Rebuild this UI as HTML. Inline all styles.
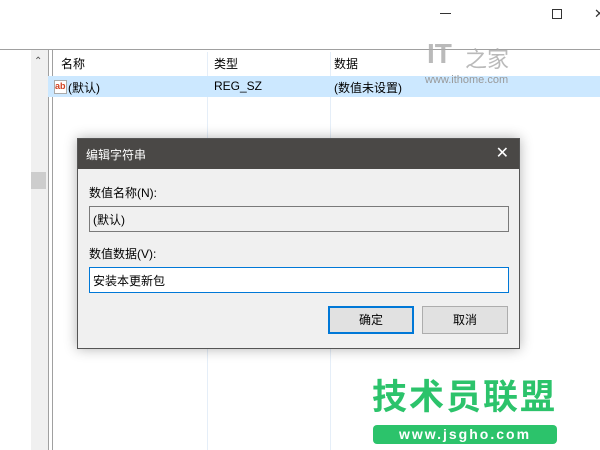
<!DOCTYPE html>
<html><head><meta charset="utf-8"><style>
*{margin:0;padding:0;box-sizing:border-box}
body{width:600px;height:450px;background:#fff;position:relative;overflow:hidden;font-family:"Liberation Sans","Noto Sans CJK SC",sans-serif;font-size:12px;color:#000}
.a{position:absolute}
</style></head><body>
<div class="a" style="left:440px;top:13px;width:11px;height:1px;background:#333"></div>
<div class="a" style="left:552px;top:9px;width:10px;height:10px;border:1px solid #333"></div>
<div class="a" style="left:594px;top:6px;font-size:13px;color:#333">✕</div>
<div class="a" style="left:0;top:49px;width:600px;height:1px;background:#a0a0a0"></div>
<div class="a" style="left:31px;top:50px;width:17px;height:400px;background:#f0f0f0"></div>
<div class="a" style="left:31px;top:172px;width:15px;height:17px;background:#cdcdcd"></div>
<div class="a" style="left:34px;top:56px;font-size:10px;color:#555">&#8963;</div>
<div class="a" style="left:48px;top:50px;width:1px;height:400px;background:#a0a0a0"></div>
<div class="a" style="left:52px;top:50px;width:1px;height:400px;background:#a0a0a0"></div>
<div class="a" style="left:207px;top:52px;width:1px;height:398px;background:#e5eef8"></div>
<div class="a" style="left:330px;top:52px;width:1px;height:398px;background:#e5eef8"></div>
<div class="a" style="left:48px;top:76px;width:552px;height:21px;background:#cce8ff"></div>
<div class="a" style="left:61px;top:55px">名称</div>
<div class="a" style="left:214px;top:55px">类型</div>
<div class="a" style="left:334px;top:55px">数据</div>
<div class="a" style="left:54px;top:80px;width:13px;height:14px;border:1px solid #aaa;background:#fff;color:#d04020;font-size:9px;font-weight:bold;line-height:10px">ab</div>
<div class="a" style="left:68px;top:79px">(默认)</div>
<div class="a" style="left:214px;top:79px">REG_SZ</div>
<div class="a" style="left:334px;top:79px">(数值未设置)</div>
<div class="a" style="left:427px;top:40px;width:35px;height:28px;color:#aaa;font-size:28px;font-weight:bold;line-height:28px;opacity:.8">IT</div>
<div class="a" style="left:465px;top:42px;color:#aaa;font-size:22px;opacity:.8">之家</div>
<div class="a" style="left:425px;top:74px;color:#999;font-size:11px">www.ithome.com</div>
<div class="a" style="left:77px;top:138px;width:443px;height:211px;background:#f0f0f0;border:1px solid #555;box-shadow:0 0 12px rgba(0,0,0,.3)">
 <div style="height:30px;background:#4a4846;color:#fff;padding:7px 0 0 8px">编辑字符串<span style="position:absolute;right:10px;top:4px;font-size:16px">✕</span></div>
 <div class="a" style="left:11px;top:45px">数值名称(N):</div>
 <div class="a" style="left:11px;top:67px;width:420px;height:26px;border:1px solid #7a7a7a;padding:4px 3px">(默认)</div>
 <div class="a" style="left:11px;top:106px">数值数据(V):</div>
 <div class="a" style="left:11px;top:128px;width:420px;height:26px;border:1px solid #0078d7;background:#fff;padding:4px 3px">安装本更新包</div>
 <div class="a" style="left:250px;top:167px;width:86px;height:28px;border:2px solid #0078d7;background:#e1e1e1;text-align:center;line-height:24px">确定</div>
 <div class="a" style="left:344px;top:167px;width:86px;height:28px;border:1px solid #adadad;background:#e1e1e1;text-align:center;line-height:26px">取消</div>
</div>
<div class="a" style="left:372px;top:379px;color:#2cc36b;font-size:35px;font-weight:bold;letter-spacing:2px;line-height:38px;white-space:nowrap">技术员联盟</div>
<div class="a" style="left:373px;top:425px;width:184px;height:19px;background:#2cc36b;border-radius:4px;color:#fff;font-size:14px;font-weight:bold;text-align:center;line-height:19px;letter-spacing:2px">www.jsgho.com</div>
</body></html>
